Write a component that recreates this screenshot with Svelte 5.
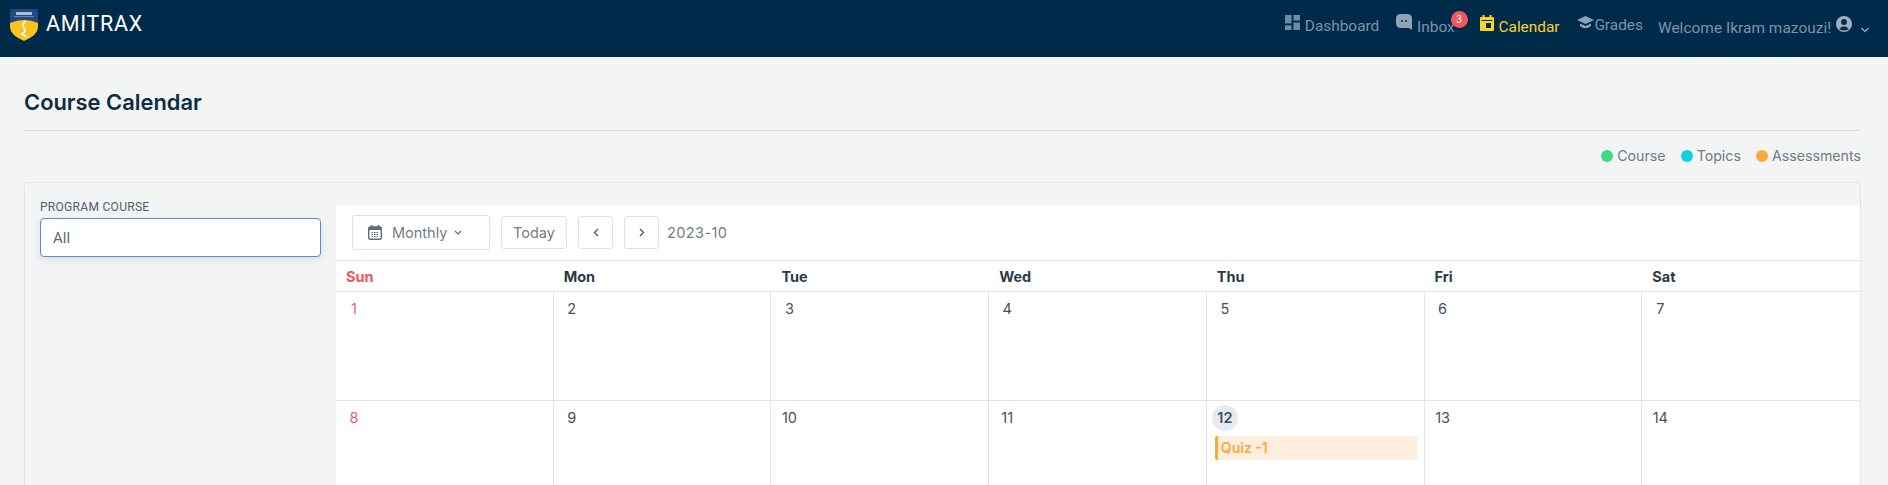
<script lang="ts">
	const days = ['Sun', 'Mon', 'Tue', 'Wed', 'Thu', 'Fri', 'Sat'];
	const weeks = [
		[1, 2, 3, 4, 5, 6, 7],
		[8, 9, 10, 11, 12, 13, 14]
	];
	const legend = [
		{ label: 'Course', color: '#3ddc84' },
		{ label: 'Topics', color: '#0fcfe3' },
		{ label: 'Assessments', color: '#f9aa3f' }
	];
</script>

<header class="navbar">
	<div class="brand">
		<svg width="30" height="34" viewBox="0 0 30 34">
			<path d="M1 4 Q1 1 4 1 H26 Q29 1 29 4 V15 H1 Z" fill="#24477f" />
			<path d="M1 15 Q15 9 29 15 V19 Q29 27 15 33 Q1 27 1 19 Z" fill="#f7c51e" />
			<rect x="7" y="4" width="16" height="3" fill="#aebbd0" />
			<rect x="5" y="8" width="20" height="1" fill="#6f86ab" />
			<path d="M17 13 Q12 16 15 20 Q18 23 13 26 L18 29" fill="none" stroke="#f3f1e4" stroke-width="2" />
		</svg>
		<span>AMITRAX</span>
	</div>
	<nav>
		<a href="#d">
			<svg width="15" height="15" viewBox="0 0 16 16" fill="#6f8aa3"><rect width="7" height="9" /><rect x="9" width="7" height="6" /><rect y="11" width="7" height="5" /><rect x="9" y="8" width="7" height="8" /></svg>
			Dashboard
		</a>
		<a href="#i" class="inbox">
			<svg width="16" height="17" viewBox="0 0 16 17"><path d="M5 0 H11 Q16 0 16 5 V16 L13 14 H5 Q0 14 0 9 V5 Q0 0 5 0 Z" fill="#8fa3b6" /><circle cx="6" cy="7" r="1.1" fill="#0b2d4b" /><circle cx="10" cy="7" r="1.1" fill="#0b2d4b" /></svg>
			Inbox
			<span class="badge">3</span>
		</a>
		<a href="#c" class="active">
			<svg width="14" height="16" viewBox="0 0 14 16"><rect y="2" width="14" height="14" rx="1" fill="#ffd21f" /><rect x="2.500" width="2" height="4" fill="#ffd21f" /><rect x="9.500" width="2" height="4" fill="#ffd21f" /><rect x="1.500" y="5" width="11" height="1" fill="#002a4a" /><rect x="6" y="8" width="5" height="5" fill="#002a4a" /></svg>
			Calendar
		</a>
		<a href="#g" class="grades">
			<svg width="17" height="13" viewBox="0 0 17 13" fill="#8fa3b6"><path d="M8.500 0 L17 4 L8.500 8 L0 4 Z" /><path d="M3 7.500 L8.500 10 L14 7.500 V10 Q8.500 14.500 3 10 Z" /></svg>
			Grades
		</a>
		<div class="user">
			Welcome Ikram mazouzi!
			<svg width="16" height="16" viewBox="0 0 16 16"><circle cx="8" cy="8" r="8" fill="#9fb1c1" /><circle cx="8" cy="6" r="3" fill="#0b2d4b" /><path d="M3 13 Q8 7.500 13 13 Q8 16 3 13 Z" fill="#0b2d4b" /></svg>
			<svg class="chev" width="10" height="6" viewBox="0 0 10 6"><path d="M1.500 1 L5 4.500 L8.500 1" fill="none" stroke="#8fa3b6" stroke-width="1.500" /></svg>
		</div>
	</nav>
</header>

<main>
	<h1>Course Calendar</h1>
	<div class="legend">
		{#each legend as item}
			<span class="item"><i style="background:{item.color}"></i>{item.label}</span>
		{/each}
	</div>

	<section class="card">
		<aside>
			<label for="course">PROGRAM COURSE</label>
			<input id="course" type="text" value="All" />
		</aside>

		<div class="calendar">
			<div class="toolbar">
				<button class="monthly">
					<svg width="14" height="15" viewBox="0 0 14 15"><rect x="0.700" y="2" width="12.600" height="12.300" rx="1.500" fill="none" stroke="#5f6b76" stroke-width="1.400" /><rect x="1" y="2" width="12" height="3" fill="#5f6b76" /><rect x="3" width="1.500" height="3" fill="#5f6b76" /><rect x="9.500" width="1.500" height="3" fill="#5f6b76" /><path d="M3.500 7.500 H10.500 M3.500 9.500 H10.500 M3.500 11.500 H10.500" stroke="#5f6b76" stroke-dasharray="1.500 1" /></svg>
					Monthly
					<svg class="caret" width="8" height="5" viewBox="0 0 8 5"><path d="M1 1 L4 4 L7 1" fill="none" stroke="#5f6b76" stroke-width="1.200" /></svg>
				</button>
				<button class="today">Today</button>
				<button class="arrow">
					<svg width="6" height="9" viewBox="0 0 6 9"><path d="M5 1 L1.500 4.500 L5 8" fill="none" stroke="#4f5a64" stroke-width="1.400" /></svg>
				</button>
				<button class="arrow next">
					<svg width="6" height="9" viewBox="0 0 6 9"><path d="M1 1 L4.500 4.500 L1 8" fill="none" stroke="#4f5a64" stroke-width="1.400" /></svg>
				</button>
				<span class="month">2023-10</span>
			</div>

			<div class="head">
				{#each days as d, i}
					<div class:sun={i === 0}>{d}</div>
				{/each}
			</div>

			{#each weeks as week}
				<div class="week">
					{#each week as n, i}
						<div class="cell">
							<span class="num" class:sun={i === 0} class:today={n === 12}>{n}</span>
							{#if n === 12}
								<div class="event">Quiz -1</div>
							{/if}
						</div>
					{/each}
				</div>
			{/each}
		</div>
	</section>
</main>

<style>
	:global(body) {
		margin: 0;
		background: #f3f4f4;
		font-family: 'Inter', 'Noto Sans', sans-serif;
		overflow: hidden;
	}
	.navbar {
		height: 57px;
		box-sizing: border-box;
		background: #002a4a;
		display: flex;
		justify-content: space-between;
		padding: 8px 18px 0 9px;
	}
	.brand {
		display: flex;
		align-items: flex-start;
		gap: 7px;
		color: #fff;
		font-size: 21.500px;
		font-family: 'Roboto', sans-serif;
		line-height: 25px;
		letter-spacing: 0.7px;
	}
	.brand span {
		margin-top: 3px;
	}
	nav {
		display: flex;
		align-items: flex-start;
		color: #7d93a8;
		font-size: 15.400px;
		font-family: 'Roboto', sans-serif;
		line-height: 20px;
		padding-top: 7px;
	}
	nav a {
		color: inherit;
		text-decoration: none;
		position: relative;
		margin-right: 17px;
		white-space: nowrap;
	}
	nav a svg {
		vertical-align: 1px;
		margin-right: 1px;
	}
	nav a.active {
		color: #ffd21f;
	}
	nav a.inbox {
		margin-right: 25px;
		top: -1px;
	}
	nav a.grades {
		margin-right: 15px;
	}
	.grades svg {
		margin-right: -3px;
	}
	.badge {
		position: absolute;
		top: -3px;
		right: -13px;
		width: 17px;
		height: 17px;
		border-radius: 50%;
		background: #f25560;
		color: #fff;
		font-size: 10px;
		line-height: 17px;
		text-align: center;
	}
	.user {
		padding-top: 1px;
		letter-spacing: 0.05px;
	}
	.user svg {
		vertical-align: 1px;
		margin-left: 1px;
	}
	.user .chev {
		margin-left: 4px;
		vertical-align: 0;
	}
	main {
		height: 428px;
		box-sizing: border-box;
		overflow: hidden;
		padding: 0 27px 0 24px;
	}
	h1 {
		margin: 0;
		height: 74px;
		box-sizing: border-box;
		padding-top: 31px;
		border-bottom: 1px solid #d8dbdc;
		font-family: 'Inter', sans-serif;
		font-size: 21.900px;
		font-weight: 600;
		line-height: 28px;
		color: #0d2c45;
	}
	.legend {
		display: flex;
		justify-content: flex-end;
		align-items: flex-start;
		gap: 15px;
		padding-top: 16px;
		height: 51px;
		box-sizing: border-box;
		font-size: 14.200px;
		line-height: 18px;
		color: #6f7c87;
	}
	.item {
		display: flex;
		align-items: center;
		gap: 4px;
	}
	.item i {
		width: 12px;
		height: 12px;
		border-radius: 50%;
	}
	.card {
		display: flex;
		align-items: flex-start;
		gap: 15px;
		border: 1px solid #e3e5e6;
		border-bottom: 0;
		border-radius: 4px 4px 0 0;
		padding: 22px 0 0 15px;
		height: 303px;
		box-sizing: border-box;
	}
	aside {
		width: 281px;
		flex: none;
		margin-top: -1px;
	}
	label {
		display: block;
		font-family: 'Roboto', sans-serif;
		font-size: 12px;
		letter-spacing: 0.3px;
		line-height: 14px;
		color: #4c5e70;
		margin: -4px 0 4px;
	}
	input {
		width: 100%;
		height: 39px;
		box-sizing: border-box;
		border: 1px solid #5f86cf;
		border-radius: 4px;
		background: #fff;
		padding: 0 12px;
		font: 15px 'Roboto', sans-serif;
		color: #5a6a78;
		box-shadow: 0 3px 6px rgba(60, 70, 90, 0.12);
		outline: none;
	}
	.calendar {
		flex: 1;
		background: #fff;
		height: 280px;
		overflow: hidden;
		min-width: 0;
	}
	.toolbar {
		height: 56px;
		box-sizing: border-box;
		display: flex;
		align-items: center;
		padding: 0 0 0 16px;
		gap: 11px;
		border-bottom: 1px solid #e3e5e6;
	}
	button {
		height: 33px;
		box-sizing: border-box;
		background: #fff;
		border: 1px solid #e0e2e4;
		border-radius: 3px;
		padding: 0;
		display: flex;
		align-items: center;
		justify-content: center;
		font: 14.500px 'Inter', sans-serif;
		color: #727d86;
	}
	.monthly {
		width: 138px;
		height: 35px;
		gap: 10px;
		justify-content: flex-start;
		padding-left: 15px;
	}
	.caret {
		margin-left: -3px;
	}
	.today {
		width: 66px;
	}
	.arrow {
		width: 35px;
	}
	.month {
		font-size: 14.500px;
		color: #727d86;
		margin-left: -3px;
		letter-spacing: 0.4px;
	}
	.head,
	.week {
		display: grid;
		grid-template-columns: repeat(7, 1fr);
	}
	.head {
		height: 31px;
		border-bottom: 1px solid #e3e5e6;
		box-sizing: border-box;
		font: 700 14.500px/32px 'Inter', sans-serif;
		color: #2c3a48;
	}
	.head div {
		padding-left: 10px;
	}
	.head .sun {
		color: #f0525f;
	}
	.week {
		height: 109px;
		box-sizing: border-box;
		border-bottom: 1px solid #e3e5e6;
	}
	.cell {
		border-right: 1px solid #e3e5e6;
		padding: 4px 7px 0 5px;
		box-sizing: border-box;
		min-width: 0;
	}
	.cell:last-child {
		border-right: 0;
	}
	.num {
		display: block;
		width: 26px;
		height: 26px;
		border-radius: 50%;
		text-align: center;
		font-size: 14.500px;
		line-height: 26px;
		color: #44505c;
	}
	.num.sun {
		color: #e8636c;
	}
	.num.today {
		background: #e6ebf1;
		color: #3d4f63;
		font-weight: 600;
	}
	.event {
		margin-top: 5px;
		margin-left: 3px;
		height: 24px;
		box-sizing: border-box;
		background: #feeedd;
		border-left: 3px solid #f9aa3f;
		border-radius: 2px 0 0 2px;
		padding-left: 3px;
		color: #f9aa3f;
		font-size: 14px;
		font-weight: 600;
		line-height: 24px;
	}
</style>
